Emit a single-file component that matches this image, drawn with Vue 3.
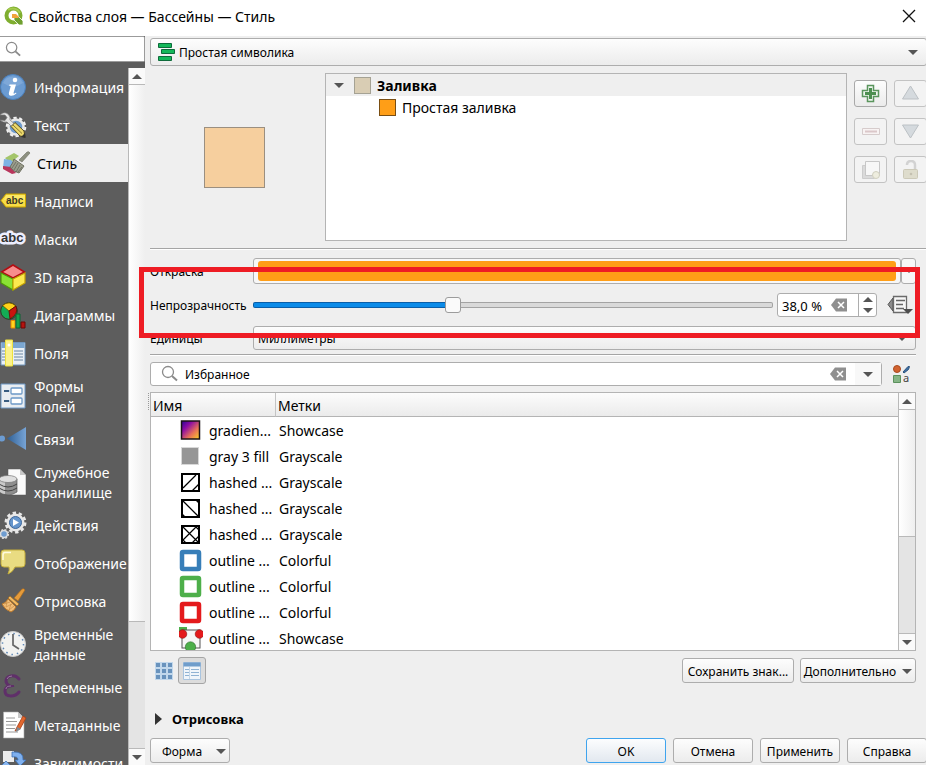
<script setup>
import { ref } from 'vue'

const opacity = ref(38)
const selected = ref('Стиль')

const sections = [
  { label: 'Информация', icon: '<circle cx="13" cy="13" r="12.500" fill="#6b9bd1" stroke="#4a80bd"/><path d="M3 9a11 11 0 0 1 20 0q-10 7-20 0z" fill="#8ab1dc" opacity=".6"/><circle cx="15" cy="6" r="2.300" fill="#fff"/><path d="M9.500 10.500h6.500l-2.500 8.500q-.2 1.400 2.500-.6l.4 1q-3 2.900-5.600 2.400-2.600-.5-1.800-3.300l1.700-6.200q-.2-.7-1.600-.6z" fill="#fff"/>' },
  { label: 'Текст', icon: '<circle cx="16" cy="15" r="7.500" fill="#6f9cce" stroke="#e8e8e8" stroke-width="2.500"/><circle cx="16" cy="15" r="9.300" fill="none" stroke="#f2f2f2" stroke-width="2" stroke-dasharray="3.300 2.550"/><path d="M0 3q4-4 8-1 3 3 2 6l6 5-3 3-6-6q-4 1-7-2l5 .5 2-3-2-2.500z" fill="#e6e6e6" stroke="#777" stroke-width=".7"/><path d="M11 14.500l4-4 9 8.500 1 6-5-1z" fill="#ecd86b" stroke="#544a20" stroke-width="1"/><path d="M13 13l9 8.500" stroke="#8a7a30"/><path d="M21 25l4-4 .6 5z" fill="#333"/>' },
  { label: 'Стиль', icon: '<g transform="translate(-1 1)"><path d="M3 7l9-5 5 3-9 7z" fill="#a4c56a"/><path d="M2 8l7 1 6 6-8 4-6-2z" fill="#7eb2e4"/><path d="M1 15l8 1 5 6-4 1-9-5z" fill="#b9365c"/><path d="M17 9l8-8q2-1 3 1l-8 9z" fill="#8d9080" stroke="#6e7163" stroke-width=".6"/><path d="M12 8l10 7-5 7q-5-1-9-6 3-4 4-8z" fill="#9b9d8c" stroke="#6e7060"/><path d="M14 11l-4 6M16 12l-4 7M18 14l-4 7M20 16l-4 5" stroke="#66695c" stroke-width=".8"/></g>' },
  { label: 'Надписи', icon: '<path d="M1 12.500L6 6h19.500v13H6z" fill="#f7dc45" stroke="#c9a400"/><path d="M6 7h19v5H4z" fill="#fff07c" opacity=".6"/><text x="6" y="16" font-family="Liberation Sans" font-weight="bold" font-size="10" fill="#3b3826">abc</text>' },
  { label: 'Маски', icon: '<text x="1" y="16" font-family="Liberation Sans" font-weight="bold" font-size="13" fill="#333" stroke="#eceeff" stroke-width="5" stroke-linejoin="round" paint-order="stroke">abc</text>' },
  { label: '3D карта', icon: '<path d="M13 1l11.500 7L13 14 1.500 8z" fill="#f78d8d" stroke="#b30d12" stroke-width="1.500"/><path d="M1 9l12 6v11L1 19z" fill="#8ae234" stroke="#4e9a06" stroke-width="1.200"/><path d="M25 9l-12 6v11l12-7z" fill="#fce94f" stroke="#c4a000" stroke-width="1.200"/>' },
  { label: 'Диаграммы', icon: '<circle cx="9" cy="9" r="8.300" fill="#14ad55" stroke="#2c3b22"/><path d="M9 9L2.500 3.500Q9-2 16 4z" fill="#ffd21a" stroke="#6b4d00" stroke-width=".8"/><path d="M9 9l7-5q3 8-6 13z" fill="#c8140f" stroke="#5a0b08" stroke-width=".8"/><path d="M11 18.500h4V26h-4z" fill="#ffd51e" stroke="#e88b00"/><path d="M16 12h4v14h-4z" fill="#14a04e" stroke="#0d6535"/><path d="M21 20h4v6h-4z" fill="#b5130f" stroke="#6b0907"/>' },
  { label: 'Поля', icon: '<path d="M1 2.500h24V25H1z" fill="#e9eff5" stroke="#7096bd"/><path d="M1.500 3h23v5h-23z" fill="#7ba7d1"/><path d="M2 11h4M2 14h4M2 17h4M2 20h4M14 11h9M14 14h9M14 17h9M14 20h9" stroke="#6b86a3"/><path d="M5.500 0h7v26h-7z" fill="#fbf28c" stroke="#eee13e"/><circle cx="9" cy="5" r="1.500" fill="#fff"/>' },
  { label: 'Формы полей', icon: '<path d="M1 1h24v24H1z" fill="#e9edf1" stroke="#6c98c6"/><rect x="11" y="5" width="11" height="6" rx="1" fill="#fff" stroke="#6c98c6" stroke-width="1.300"/><rect x="11" y="15" width="11" height="6" rx="1" fill="#fff" stroke="#6c98c6" stroke-width="1.300"/><path d="M4 8h5M4 18h5" stroke="#395c80" stroke-width="2"/><path d="M9 8h2M9 18h2" stroke="#9ab9d8"/>' },
  { label: 'Связи', icon: '<defs><linearGradient id="rel"><stop stop-color="#2f5f94"/><stop offset="1" stop-color="#77a4d6"/></linearGradient></defs><path d="M7 12.500L26 1v23z" fill="url(#rel)"/><circle cx="2" cy="12.500" r="3" fill="#6c9cd2"/>' },
  { label: 'Служебное хранилище', icon: '<path d="M8 0h12l6 6v20H8z" fill="#fafafa" stroke="#555" stroke-width=".5"/><path d="M20 0v6h6z" fill="#c8c8c8"/><path d="M-1 10v13q9 6 18 0V10z" fill="#8e8e8e" stroke="#555" stroke-width=".7"/><path d="M0 11v12q2 2 5 2V12z" fill="#c9c9c9"/><ellipse cx="8" cy="10" rx="9" ry="3.500" fill="#dedede" stroke="#777" stroke-width=".7"/><path d="M-1 15q9 6 18 0M-1 19q9 6 18 0" fill="none" stroke="#444"/>' },
  { label: 'Действия', icon: '<circle cx="15.500" cy="10.500" r="9.700" fill="none" stroke="#e8e8e8" stroke-width="2.500" stroke-dasharray="3.400 2.680"/><circle cx="15.500" cy="10.500" r="7.500" fill="#6595cc" stroke="#e8e8e8" stroke-width="3"/><circle cx="15.500" cy="10.500" r="6" fill="none" stroke="#3d679a"/><path d="M13 7v7l6-3.500z" fill="#fff"/><circle cx="4" cy="22" r="3.500" fill="#6f9dd0" stroke="#ddd" stroke-width="1.500"/><circle cx="4" cy="22" r="4.500" fill="none" stroke="#ddd" stroke-width="1.200" stroke-dasharray="2 1.530"/>' },
  { label: 'Отображение', icon: '<path d="M4 0h18q3 0 3 3v11q0 3-3 3h-7q-2 5-7 7 2-4 1-7H4q-3 0-3-3V3q0-3 3-3z" fill="#e9dc82" stroke="#c4ad3a"/><path d="M3 10V5q0-2.500 2-2.500h6" fill="none" stroke="#fffbe0" stroke-width="1.500"/>' },
  { label: 'Отрисовка', icon: '<path d="M14 10l8-9q2-1 3 1l-7 11z" fill="#e59b3a" stroke="#a8681c" stroke-width=".7"/><path d="M10 8l9 8-2 2-9-8z" fill="#f2b960" stroke="#9a6420" stroke-width=".7"/><path d="M8 11l8 8q-2 4-5 5-6-2-9-8 4-1 6-5z" fill="#f0bd78" stroke="#b9772a"/><path d="M4 16l6-2M6 19l6-3M9 22l5-4M7 13l-1 6M11 16l-2 6" stroke="#c98d45" stroke-width=".7"/>' },
  { label: 'Временны́е данные', icon: '<circle cx="13" cy="13" r="12.500" fill="#f2f2f0" stroke="#cfcfcf"/><circle cx="13" cy="13" r="10.500" fill="none" stroke="#5d86b5" stroke-width="1.500" stroke-dasharray="1.500 4"/><path d="M13 3v11l6 4" fill="none" stroke="#666" stroke-width="1.700"/>' },
  { label: 'Переменные', icon: '<path d="M19 5q-3-4-8-3-5 1-5 5 0 3 4 5-5 1-5 5 0 5 6 5 5 0 8-4" fill="none" stroke="#5f2f69" stroke-width="3" stroke-linecap="round"/><path d="M10 12h4" stroke="#5f2f69" stroke-width="2"/><path d="M7 5q1-3 5-3M6 15q0-3 5-3" fill="none" stroke="#a58aab" stroke-width=".8"/>' },
  { label: 'Метаданные', icon: '<path d="M3.500 0H18l6 6v20H3.500z" fill="#fff" stroke="#aaa" stroke-width=".6"/><path d="M18 0v6h6z" fill="#c8c8c8"/><path d="M6 6h9M6 9.500h11M6 13h10M6 16.500h9M6 20h12" stroke="#999"/><path d="M17 15l6-11 3 2-6 11-5 2z" fill="#e2672e" stroke="#a33e14" stroke-width=".8"/><path d="M17 15l4 2-5 3z" fill="#7e8994"/>' },
  { label: 'Зависимости', icon: '<path d="M3 1h11v11H3z" fill="#ececec"/><path d="M12 2q12-1 11 8h3l-6 6-5-6h3q0-4-6-3z" fill="#7fb0ee" stroke="#3e72b8" stroke-width=".8"/><path d="M0 17l6-6 6 6H8v8H3v-8z" fill="#8ab7f0" stroke="#3e72b8" stroke-width=".8"/>' }
]

const frame = '<rect x="3" y="3" width="17" height="17" fill="#fff" stroke="#000" stroke-width="2"/>'
const outline = (c) => `<rect x="3" y="3" width="17" height="17" rx="1" fill="#fff" stroke="${c}" stroke-width="4.500"/>`
const symbols = [
  { name: 'gradien...', tag: 'Showcase', icon: '<defs><linearGradient id="plasma" x1="0" y1="0" x2="1" y2="1"><stop stop-color="#2b0594"/><stop offset=".3" stop-color="#8b0aa5"/><stop offset=".65" stop-color="#e97158"/><stop offset="1" stop-color="#fcd225"/></linearGradient></defs><rect x="2.500" y="2" width="18" height="18" fill="url(#plasma)" stroke="#1b1216" stroke-width="1.500"/>' },
  { name: 'gray 3 fill', tag: 'Grayscale', icon: '<rect x="2.500" y="2.500" width="17" height="17" fill="#969696" stroke="#d8d8d8"/>' },
  { name: 'hashed ...', tag: 'Grayscale', icon: frame + '<path d="M4 17L17 4M13 20l7-7" stroke="#000" stroke-width="1.300"/>' },
  { name: 'hashed ...', tag: 'Grayscale', icon: frame + '<path d="M4 4l16 16M17 3l3 3M3 17l3 3" stroke="#000" stroke-width="1.300"/>' },
  { name: 'hashed ...', tag: 'Grayscale', icon: frame + '<path d="M4 4l16 16M4 17L17 4M13 20l7-7M16 3l4 4M3 16l4 4" stroke="#000" stroke-width="1.200"/>' },
  { name: 'outline ...', tag: 'Colorful', icon: outline('#377eb8') },
  { name: 'outline ...', tag: 'Colorful', icon: outline('#4daf4a') },
  { name: 'outline ...', tag: 'Colorful', icon: outline('#e41a1c') },
  { name: 'outline ...', tag: 'Showcase', icon: '<path d="M0 0h8v6H0z" fill="#4daf4a"/><rect x="3" y="3" width="18" height="18" fill="#f6f6f6" stroke="#555"/><circle cx="3.500" cy="7" r="4.300" fill="#e41a1c" stroke="#8b1010" stroke-width=".6"/><circle cx="20.500" cy="7" r="4.300" fill="#e41a1c" stroke="#8b1010" stroke-width=".6"/><circle cx="11.500" cy="20" r="5.200" fill="#4daf4a" stroke="#2d6b2b" stroke-width=".6"/>' }
]

const tools = [
  { label: 'Добавить слой', icon: '<path d="M7.500 1.500h6v5h5v6h-5v5h-6v-5h-5v-6h5z" fill="#f1f7f1" stroke="#5a955d" stroke-width="1.500"/><path d="M10.500 4v11M5 9.500h11" stroke="#4c8f50" stroke-width="3"/>' },
  { label: 'Вверх', off: true, icon: '<path d="M10.500 2l8 13h-16z" fill="#d5dade" stroke="#bcc1c5"/>' },
  { label: 'Удалить слой', off: true, icon: '<path d="M2.500 6.500h17v6h-17z" fill="#f8f3f3" stroke="#d6cccc"/><path d="M5 9.500h12" stroke="#dbc7c9" stroke-width="2"/>' },
  { label: 'Вниз', off: true, icon: '<path d="M2.500 3h16l-8 13z" fill="#d5dade" stroke="#bcc1c5"/>' },
  { label: 'Дублировать слой', off: true, icon: '<path d="M2.500 5.500h12v13h-12z" fill="#dadada" stroke="#ccc"/><path d="M5.500 1.500h14v14h-14z" fill="#f7f7f7" stroke="#c7c7c7"/><circle cx="16" cy="15" r="3.500" fill="#eeeddf" stroke="#d0cfbf"/>' },
  { label: 'Блокировать цвет', off: true, icon: '<path d="M7 5q0-4 4-4t4 4v6" fill="none" stroke="#d2d2d2" stroke-width="2.500"/><rect x="3.500" y="9.500" width="14" height="9" rx="1" fill="#dedccc" stroke="#ccc9b8"/><circle cx="11" cy="14" r="1.300" fill="#c4c1b1"/>' }
]
</script>

<template>
  <div class="window">
    <header class="title">
      <svg class="logo" viewBox="0 0 20 20" aria-hidden="true">
        <circle cx="9.500" cy="9.500" r="7" fill="none" stroke="#7fae2f" stroke-width="4" />
        <path d="M4 4a8 8 0 0 1 12 3" fill="none" stroke="#a5cb4d" stroke-width="2" />
        <path d="M10 10h4l5 5v4h-4l-5-5z" fill="#6fa02f" stroke="#fff" stroke-width=".8" />
        <path d="M8 8h4l3 3-1 1H8z" fill="#f0a33c" />
      </svg>
      <h1>Свойства слоя — Бассейны — Стиль</h1>
      <button class="close" aria-label="Закрыть"><svg viewBox="0 0 14 14"><path d="M1 1l12 12M13 1L1 13" stroke="#111" stroke-width="1.300" /></svg></button>
    </header>

    <div class="body">
      <aside class="side">
        <label class="find">
          <svg viewBox="0 0 18 18" aria-hidden="true"><circle cx="7" cy="7" r="5.500" fill="none" stroke="#8b8b8b" stroke-width="1.300" /><path d="M11 11l5 4.500" stroke="#8b8b8b" stroke-width="2" /></svg>
          <input type="search" aria-label="Поиск" />
        </label>
        <div class="sidebody">
          <nav class="sections">
            <a v-for="s in sections" :key="s.label" href="#" :class="{ on: s.label === selected }" @click.prevent="selected = s.label">
              <svg viewBox="0 0 26 26" aria-hidden="true" v-html="s.icon"></svg>
              <span>{{ s.label }}</span>
            </a>
          </nav>
          <div class="bar navbar"><i class="up"></i><b></b><i class="down"></i></div>
        </div>
      </aside>

      <main>
        <div class="select symbology">
          <svg viewBox="0 0 18 18" aria-hidden="true"><g fill="#14b85a" stroke="#0e6b3b"><path d="M.5 .5h13v4H.5zM3.500 6.500h13v4h-13zM.5 13.500h13v4H.5z" /></g></svg>
          <select aria-label="Символика"><option>Простая символика</option></select>
        </div>

        <section class="symbol">
          <div class="preview"><div class="swatch"></div></div>
          <ul class="tree">
            <li class="root"><i class="down"></i><em class="chip beige"></em><strong>Заливка</strong></li>
            <li class="leaf"><em class="chip orange"></em><span>Простая заливка</span></li>
          </ul>
          <div class="tools">
            <button v-for="t in tools" :key="t.label" class="tool" :aria-label="t.label" :disabled="t.off">
              <svg viewBox="0 0 21 20" v-html="t.icon"></svg>
            </button>
          </div>
        </section>

        <section class="form">
          <div class="row tall">
            <span class="lab">Откраска</span>
            <button class="color" aria-label="Цвет"><span></span></button>
            <button class="colormenu" aria-label="Меню цвета"><i class="down small"></i></button>
          </div>
          <div class="row">
            <label class="lab" for="opacity">Непрозрачность</label>
            <input id="opacity" v-model="opacity" type="range" min="0" max="100" :style="{ '--fill': opacity + '%' }" />
            <div class="spin">
              <input type="text" :value="Number(opacity).toFixed(1).replace('.', ',') + ' %'" aria-label="Процент непрозрачности" />
              <button class="clear" aria-label="Сбросить"><svg viewBox="0 0 16 14"><path d="M0 7l5-6.500h11v13H5z" fill="#8f8f8f" /><path d="M7 4l6 6M13 4l-6 6" stroke="#fff" stroke-width="1.500" /></svg></button>
              <div class="steps">
                <button aria-label="Больше"><i class="up"></i></button>
                <button aria-label="Меньше"><i class="down"></i></button>
              </div>
            </div>
            <button class="override" aria-label="Переопределение данными">
              <svg viewBox="0 0 26 20"><path d="M6 3L1 9.500 6 16z" fill="#8d8d8d" stroke="#555" /><path d="M6.500 1.500h13v16h-13z" fill="#f7f7f7" stroke="#6b6b6b" stroke-width="1.300" /><path d="M9 5.500h9M9 9.500h7M9 13.500h8" stroke="#666" stroke-width="1.400" /><path d="M16 14h10l-5 5z" fill="#4d4d4d" /></svg>
            </button>
          </div>
          <div class="row">
            <label class="lab" for="units">Единицы</label>
            <div class="select units"><select id="units"><option>Миллиметры</option></select></div>
          </div>
          <div class="mark"></div>
        </section>

        <section class="library">
          <div class="searchrow">
            <div class="filter">
              <svg viewBox="0 0 18 18" aria-hidden="true"><circle cx="7" cy="7" r="5.500" fill="none" stroke="#8b8b8b" stroke-width="1.300" /><path d="M11 11l5 4.500" stroke="#8b8b8b" stroke-width="2" /></svg>
              <input type="text" value="Избранное" aria-label="Фильтр символов" />
              <button class="clear" aria-label="Очистить"><svg viewBox="0 0 16 14"><path d="M0 7l5-6.500h11v13H5z" fill="#8f8f8f" /><path d="M7 4l6 6M13 4l-6 6" stroke="#fff" stroke-width="1.500" /></svg></button>
              <button class="open" aria-label="Список"><i class="down"></i></button>
            </div>
            <button class="manager" aria-label="Менеджер стилей">
              <svg viewBox="0 0 20 20"><circle cx="5" cy="5" r="3.500" fill="#d2632f" stroke="#a84b20" /><path d="M11 8l5-5.500 1.500 0-1 3L12 9z" fill="#3f6fa3" stroke="#2f5680" /><path d="M1.500 11.500h7v7h-7z" fill="#86b586" stroke="#5b915d" /><text x="11" y="18" font-family="Noto Sans" font-size="11" fill="#444">a</text></svg>
            </button>
          </div>

          <div class="list">
            <div class="scroll">
              <table>
                <thead><tr><th class="name">Имя</th><th>Метки</th></tr></thead>
                <tbody>
                  <tr v-for="(s, n) in symbols" :key="n">
                    <td><div class="cell"><svg viewBox="0 0 24 24" aria-hidden="true" v-html="s.icon"></svg><span>{{ s.name }}</span></div></td>
                    <td>{{ s.tag }}</td>
                  </tr>
                </tbody>
              </table>
            </div>
            <div class="bar listbar"><i class="up"></i><b></b><i class="down"></i></div>
          </div>

          <div class="under">
            <button class="view" aria-label="Значки"><svg viewBox="0 0 18 18"><path d="M0 0h18v18H0z" fill="#c2d8ec" /><g fill="#6993bd"><path d="M1 1h4v4H1zM7 1h4v4H7zM13 1h4v4h-4zM1 7h4v4H1zM7 7h4v4H7zM13 7h4v4h-4zM1 13h4v4H1zM7 13h4v4H7zM13 13h4v4h-4z" /></g></svg></button>
            <button class="view on" aria-label="Список"><svg viewBox="0 0 18 18"><path d="M.5 .5h17v17H.5z" fill="#f0f5fa" stroke="#a9c4df" /><path d="M.5 .5h17v4H.5z" fill="#6f9dcb" /><path d="M2 7.500h4M8 7.500h8M2 10.500h4M8 10.500h8M2 13.500h4M8 13.500h8" stroke="#8fb2d3" /><path d="M6.500 5v12" stroke="#c4d7e8" /></svg></button>
            <span class="grow"></span>
            <button class="btn save">Сохранить знак...</button>
            <button class="btn more">Дополнительно<i class="down"></i></button>
          </div>
        </section>

        <button class="collapse"><i class="right"></i>Отрисовка</button>

        <footer>
          <button class="btn menu">Форма<i class="down"></i></button>
          <span class="grow"></span>
          <button class="btn primary">OK</button>
          <button class="btn">Отмена</button>
          <button class="btn">Применить</button>
          <button class="btn">Справка</button>
        </footer>
      </main>
    </div>
  </div>
</template>

<style>
body { margin: 0; overflow: hidden; }
</style>

<style scoped>
.window { height: 100vh; display: flex; flex-direction: column; overflow: hidden; background: #efefef; color: #000; font: 12px/16px "Noto Sans", sans-serif; }
.window * { box-sizing: border-box; }
button, input, select { font: inherit; color: inherit; margin: 0; }
button { padding: 0; border: 0; background: none; }
svg { display: block; flex: none; }
.grow { flex: 1; }

.title { height: 36px; flex: none; display: flex; align-items: center; padding: 0 10px 4px 4px; gap: 5px; background: #fff; }
.logo { width: 20px; height: 20px; }
h1 { flex: 1; margin: 0; padding-top: 2px; font-size: 14px; line-height: 20px; font-weight: 400; }
.close svg { width: 14px; height: 14px; }

.body { flex: 1; min-height: 0; display: flex; }
.side { width: 145px; flex: none; display: flex; flex-direction: column; background: #5d5d5d; }
.find { height: 26px; margin-bottom: 6px; flex: none; display: flex; align-items: center; padding-left: 5px; background: #fff; border: 1px solid #9b9b9b; border-left: 0; border-radius: 0 2px 2px 0; }
.find svg { width: 17px; height: 17px; }
.find input { min-width: 0; flex: 1; border: 0; outline: 0; background: none; }
.sidebody { flex: 1; min-height: 0; display: flex; }
.sections { flex: 1; min-width: 0; overflow: hidden; font-size: 14px; line-height: 20px; }
.sections a { display: flex; align-items: center; gap: 8px; padding: 3px 0; min-height: 38px; color: #fff; text-decoration: none; }
.sections span { padding-top: 2px; }
.sections svg { width: 26px; height: 26px; overflow: visible; }
.sections a.on { background: #efefef; color: #000; padding-left: 3px; }

i { width: 0; height: 0; flex: none; border: 5px solid transparent; }
i.down { border-top-color: #555; border-bottom: 0; }
i.up { border-bottom-color: #555; border-top: 0; }
i.right { border: 6px solid transparent; border-left: 7px solid #333; border-right: 0; }
i.small { border-width: 4px 4px 0; }

.bar { width: 17px; flex: none; display: grid; justify-items: center; align-items: center; border-left: 1px solid #b9b9b9; background: linear-gradient(#fafafa 0 16px, #e4e4e4 16px calc(100% - 17px), #b9b9b9 calc(100% - 17px) calc(100% - 16px), #fafafa 0); }
.bar b { width: 100%; height: 100%; background: linear-gradient(90deg, #fff, #efefef); border: solid #b9b9b9; border-width: 1px 0; }
.bar i.down { grid-row: 4; }
.navbar { grid-template-rows: 16px 538px 1fr 16px; }
.listbar { grid-template-rows: 16px 128px 1fr 16px; }

main { flex: 1; min-width: 0; display: flex; flex-direction: column; padding: 2px 0 2px 5px; margin-right: -1px; }
.select { position: relative; display: flex; align-items: center; }
.select::after { content: ""; position: absolute; right: 9px; border: 5px solid transparent; border-top-color: #555; border-bottom: 0; pointer-events: none; }
.select select { appearance: none; width: 100%; height: 100%; padding: 2px 4px 0; border: 1px solid #adadad; border-radius: 3px; background: linear-gradient(#fdfdfd, #ececec); }
.symbology { height: 28px; flex: none; }
.symbology svg { position: absolute; left: 8px; width: 18px; height: 18px; }
.symbology select { padding-left: 28px; }

.symbol { height: 184px; flex: none; display: flex; gap: 7px; padding: 7px 0 8px; border-bottom: 1px solid #fff; box-shadow: inset 0 -1px #a5a5a5; }
.preview { width: 168px; flex: none; display: grid; place-items: center; }
.swatch { width: 61px; height: 61px; background: #f6cf9e; border: 1px solid #9b8f80; }
.tree { flex: 1; min-width: 0; margin: 0; padding: 0; list-style: none; background: #fff; border: 1px solid #b4b4b4; font-size: 14px; line-height: 20px; }
.tree li { display: flex; align-items: center; height: 22px; gap: 6px; }
.tree .root { padding-left: 8px; background: #efefef; }
.tree .root .chip { margin-left: 4px; }
.tree .leaf { padding-left: 53px; }
.tree strong, .tree span { padding-top: 2px; }
.chip { width: 17px; height: 17px; border: 1px solid #333; }
.beige { background: #d9cdb4; border-color: #a5a294; }
.orange { background: #ff9e17; border-color: #7a4e12; }
.tools { display: grid; grid-template-columns: 33px 33px; grid-auto-rows: 27px; gap: 11px 7px; padding-top: 7px; }
.tool { display: grid; place-items: center; border: 1px solid #a9a9a9; border-radius: 3px; background: linear-gradient(#fdfdfd, #ebebeb); }
.tool:disabled { border-color: #c3c3c3; background: #f3f3f3; }
.tool svg { width: 21px; height: 20px; }

.form { position: relative; flex: none; display: flex; flex-direction: column; gap: 9px; margin-right: 11px; padding: 8px 0 4px; }
.row { display: flex; align-items: center; height: 24px; }
.row.tall { height: 26px; }
.lab { width: 103px; flex: none; padding-top: 2px; }
.color { flex: 1; height: 100%; padding: 2px 4px; border: 1px solid #adadad; border-radius: 3px; background: #f7f7f7; }
.color span { display: block; height: 100%; border-radius: 3px; background: #ff9e17; }
.colormenu { width: 15px; height: 100%; display: grid; place-items: center; border: 1px solid #adadad; border-radius: 3px; background: #f7f7f7; }
input[type="range"] { appearance: none; flex: 1; min-width: 0; height: 18px; background: none; }
input[type="range"]::-webkit-slider-runnable-track { height: 6px; border: 1px solid transparent; border-radius: 2px; background: linear-gradient(90deg, #0b8be8 var(--fill), #d9d9d9 var(--fill)) padding-box, linear-gradient(90deg, #0a5ea8 var(--fill), #a3a3a3 var(--fill)) border-box; }
input[type="range"]::-webkit-slider-thumb { appearance: none; width: 16px; height: 16px; margin-top: -6px; border: 1px solid #9c9c9c; border-radius: 3px; background: #fafafa; }
.spin { width: 100px; height: 24px; margin-left: 4px; display: flex; align-items: center; background: #fff; border: 1px solid #adadad; border-radius: 3px; }
.spin input { width: 53px; padding: 1px 0 0 4px; border: 0; outline: 0; background: none; font-size: 13px; }
.clear svg { width: 16px; height: 14px; }
.steps { width: 18px; height: 100%; margin-left: auto; display: grid; border-left: 1px solid #adadad; }
.steps button { display: grid; place-items: center; }
.override { margin: 0 3px 0 10px; }
.override svg { width: 26px; height: 20px; }
.units { flex: 1; height: 100%; }
.mark { position: absolute; inset: 17px -4px 16px -11px; border: 5px solid #ee1c24; pointer-events: none; }

.library { flex: 1; min-height: 0; display: flex; flex-direction: column; margin-right: 11px; border-top: 1px solid #a5a5a5; box-shadow: inset 0 1px #fff; padding-top: 7px; }
.searchrow { height: 24px; display: flex; align-items: center; gap: 10px; margin-bottom: 6px; flex: none; }
.filter { flex: 1; height: 100%; display: flex; align-items: center; padding-left: 10px; background: #fff; border: 1px solid #adadad; border-radius: 3px; }
.filter > svg { width: 18px; height: 18px; }
.filter input { flex: 1; min-width: 0; padding: 2px 6px 0; border: 0; outline: 0; background: none; }
.open { width: 26px; height: 100%; margin-left: 9px; display: grid; place-items: center; background: #f8f8f8; }
.manager { width: 24px; }
.manager svg { width: 20px; height: 20px; }

.list { position: relative; flex: 1; min-height: 0; display: flex; background: #fff; border: 1px solid #b4b4b4; }
.list::before { content: ""; position: absolute; left: -3px; top: 0; height: 17px; border-left: 1px dotted #999; }
.scroll { flex: 1; min-width: 0; overflow: hidden; }
table { width: 100%; table-layout: fixed; border-collapse: separate; border-spacing: 0; font-size: 14px; line-height: 20px; }
th { height: 24px; padding: 2px 2px 0; text-align: left; font-weight: 400; background: linear-gradient(#fcfcfc, #ebebeb); border-bottom: 1px solid #b4b4b4; }
th.name { width: 125px; border-right: 1px solid #c4c4c4; }
td { height: 26px; padding: 2px 3px 0; white-space: nowrap; }
.cell { display: flex; align-items: center; gap: 6px; padding-left: 25px; }
.cell svg { width: 24px; height: 24px; }

.under { display: flex; align-items: center; height: 25px; margin-top: 7px; flex: none; gap: 6px; }
.view { width: 28px; height: 27px; margin-right: -6px; display: grid; place-items: center; border-radius: 3px; }
.view.on { margin-right: 0; border: 1px solid #a5a5a5; background: #dcdcdc; }
.view svg { width: 18px; height: 18px; }
.btn { width: 80px; height: 25px; padding-top: 2px; display: flex; align-items: center; justify-content: center; white-space: nowrap; border: 1px solid #adadad; border-radius: 3px; background: linear-gradient(#fdfdfd, #ececec); }
.save { width: 112px; }
.more { width: 116px; gap: 6px; }
.menu { gap: 14px; padding-left: 8px; }
.primary { border-color: #3fa4ee; background: linear-gradient(#fcfdfe, #e2e8ef); }
.collapse { display: flex; align-items: center; gap: 10px; height: 24px; margin: 24px 0 7px; padding-left: 5px; font-size: 13px; font-weight: 700; flex: none; }
footer { display: flex; gap: 7px; flex: none; }
</style>
